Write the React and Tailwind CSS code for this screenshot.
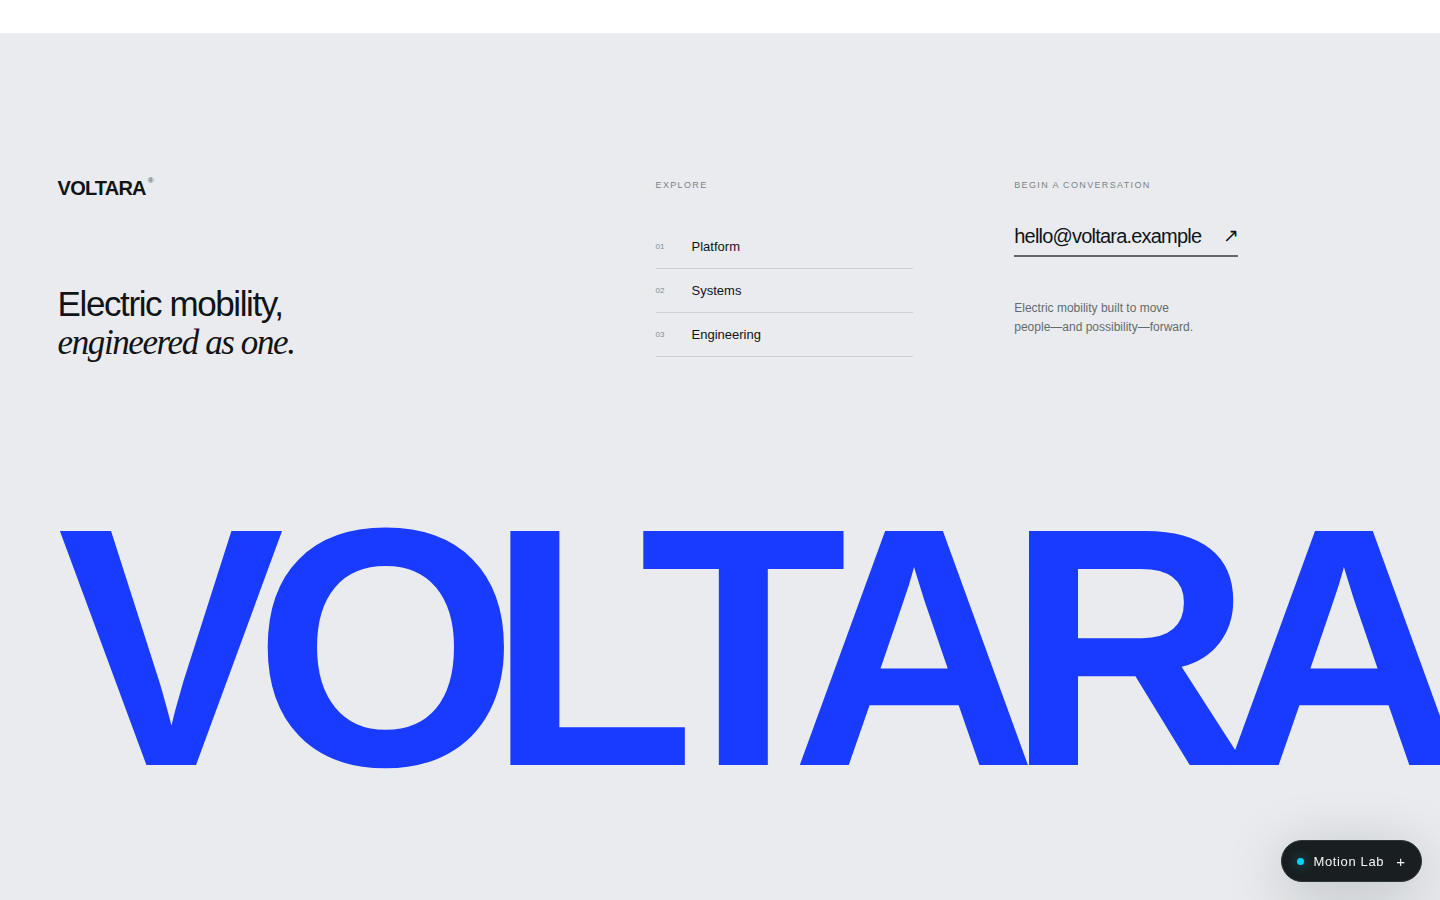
import React, { useState } from "react";

const links = [
  { num: "01", label: "Platform", href: "#platform" },
  { num: "02", label: "Systems", href: "#systems" },
  { num: "03", label: "Engineering", href: "#engineering" },
];

function MotionLabButton() {
  const [open, setOpen] = useState(false);

  return (
    <button
      type="button"
      aria-expanded={open}
      onClick={() => setOpen(!open)}
      className="fixed right-[18px] bottom-[18px] z-50 flex h-[42px] items-center rounded-full border border-[#2f3538] bg-[#191e20] pt-px pr-4 pl-[15px] text-[13px] tracking-[0.05em] text-[#f2f4f5] shadow-[0_12px_60px_rgba(10,20,20,0.22)]"
    >
      <span className="mr-[9px] h-[7px] w-[7px] rounded-full bg-[#00d5ff] shadow-[0_0_12px_rgba(0,213,255,0.6)]" />
      Motion Lab
      <span className="ml-3 text-[15px] leading-none tracking-normal">+</span>
    </button>
  );
}

export default function App() {
  return (
    <div className="flex min-h-screen flex-col overflow-x-hidden bg-white pt-[33px] font-['Liberation_Sans',Arial,sans-serif] text-[#111416]">
      <footer className="flex-1 overflow-hidden bg-[#e9ebee] px-[4vw] pt-36">
        <div className="grid grid-cols-[1.35fr_0.7fr_1fr] gap-[101px]">
          {/* Brand */}
          <div>
            <a href="#top" className="flex items-start text-[20px] leading-[22px] font-bold tracking-[-0.04em]">
              VOLTARA
              <span className="ml-[2px] text-[8px] leading-[8px] tracking-normal text-[#60676b]">®</span>
            </a>
            <h2 className="mt-[86px] text-[35px] leading-[38px] font-normal tracking-[-0.04em]">
              Electric mobility,
              <br />
              <em className="font-['Liberation_Serif',serif] italic">engineered as one.</em>
            </h2>
          </div>

          {/* Explore */}
          <nav aria-label="Explore" className="pt-[3px]">
            <p className="text-[9px] leading-[10px] tracking-[0.15em] text-[#7b8285] uppercase">Explore</p>
            <ul className="mt-[35px]">
              {links.map((link) => (
                <li key={link.num}>
                  <a href={link.href} className="flex h-11 items-center border-b border-[#ccd2d6] text-[13px]">
                    <span className="w-9 text-[8px] text-[#858c90]">{link.num}</span>
                    {link.label}
                  </a>
                </li>
              ))}
            </ul>
          </nav>

          {/* Contact */}
          <div className="pt-[3px]">
            <p className="text-[9px] leading-[10px] tracking-[0.15em] text-[#7b8285] uppercase">Begin a conversation</p>
            <a
              href="mailto:hello@voltara.example"
              className="mt-[34px] inline-flex items-center gap-[22px] border-b-2 border-[#63686c] pb-[7px] text-[20px] leading-[24px] tracking-[-0.04em]"
            >
              hello@voltara.example
              <span aria-hidden="true" className="text-[19px]">↗</span>
            </a>
            <p className="mt-[42px] text-[12px] leading-[19px] text-[#646b6f]">
              Electric mobility built to move
              <br />
              people—and possibility—forward.
            </p>
          </div>
        </div>

        <div aria-hidden="true" className="mt-[149px] text-[340px] leading-[272px] font-bold tracking-[-0.09em] whitespace-nowrap text-[#183bff]">
          VOLTARA
        </div>
      </footer>

      <MotionLabButton />
    </div>
  );
}
